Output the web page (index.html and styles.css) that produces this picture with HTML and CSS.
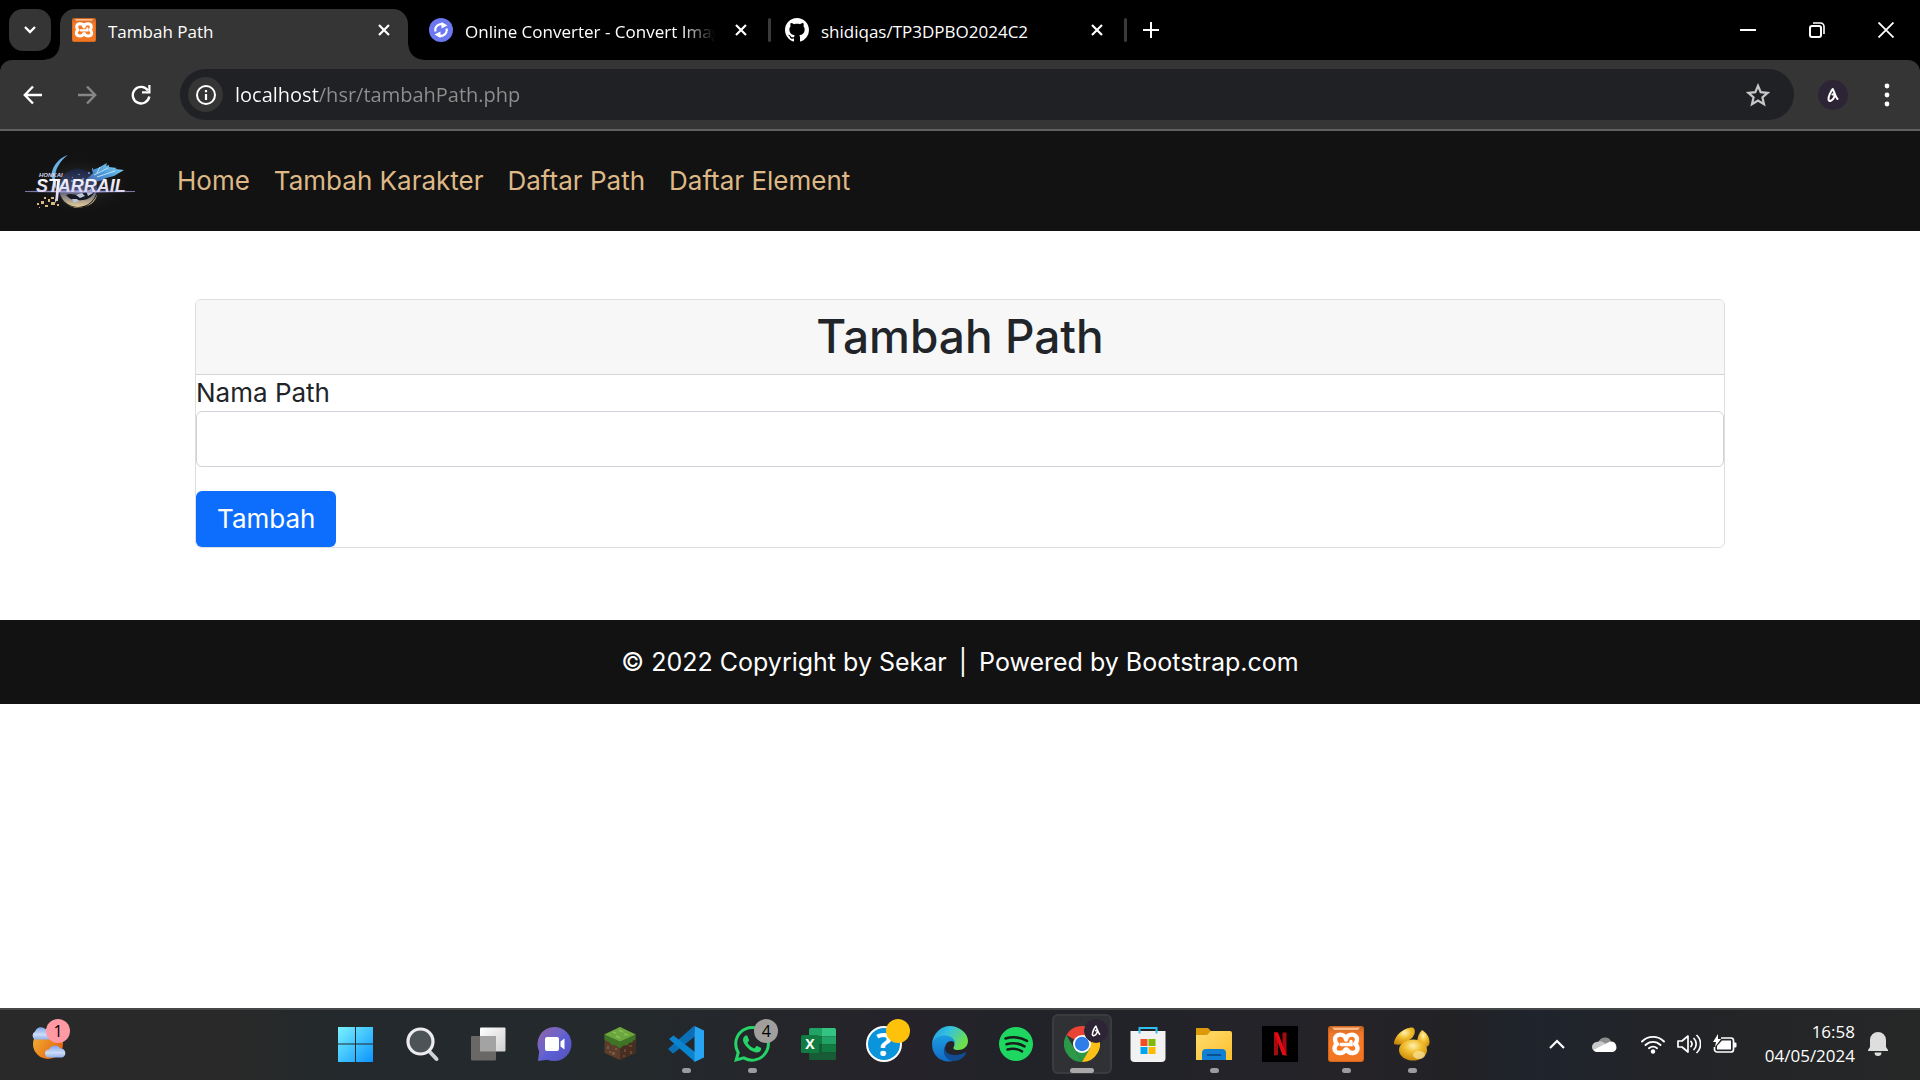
FILE: index.html
```html
<!DOCTYPE html>
<html lang="id">
<head>
<meta charset="utf-8">
<meta name="viewport" content="width=device-width, initial-scale=1">
<title>Tambah Path</title>
<link rel="stylesheet" href="styles.css">
</head>
<body>
<svg class="defs" aria-hidden="true">
  <defs>
    <linearGradient id="orange" x1="0" y1="0" x2="0" y2="1"><stop offset="0" stop-color="#c8641f"/><stop offset=".2" stop-color="#f0792c"/><stop offset=".5" stop-color="#fb7a24"/><stop offset="1" stop-color="#ef7623"/></linearGradient>
    <symbol id="xampp" viewBox="0 0 36 36">
      <rect width="36" height="36" rx="3" fill="#d4651b"/>
      <rect x="1" y="1" width="34" height="34" rx="2" fill="url(#orange)"/>
      <path d="M4 1.500h28l-2 2.500H6z" fill="#fbb98a"/>
      <path d="M18 13.500C17 7 7 7 7 13.500c0 2.500 1 3.500 2 4.500-1.500 1-2.500 2.500-2.500 4.500C6.500 28.500 16 28 17.500 23.500h1.500c1.500 4.500 10.500 5 10.500-1 0-2-1-3.500-2.500-4.500 1-1 2-2 2-4.500C29 7 19 7 18 13.500z" fill="none" stroke="#fff" stroke-width="4.400" stroke-linejoin="round"/>
      <path d="M13 18.500h10v-3" fill="none" stroke="#fff" stroke-width="3.400" stroke-linecap="round"/>
    </symbol>
    <symbol id="close" viewBox="0 0 14 14"><path d="M2 2l10 10M12 2l-10 10" stroke="#fff" stroke-width="2.200"/></symbol>
    <symbol id="avatar" viewBox="0 0 30 30">
      <circle cx="15" cy="15" r="15" fill="#2d2535"/>
      <path d="M14.500 14.500c2-1 3 0 1.500 3-1.500 3.500-5 4.500-5.500 2-.3-3 2.500-8.500 4.300-10.500 1 1.500 2.500 7.500 4.700 10" fill="none" stroke="#fff" stroke-width="2" stroke-linecap="round" stroke-linejoin="round"/>
    </symbol>
  </defs>
</svg>

<header class="browser">
  <div class="tabstrip">
    <button class="tab-search" aria-label="Search tabs"><svg width="14" height="10" viewBox="0 0 14 10"><path d="M2 2l5 5 5-5" fill="none" stroke="#fff" stroke-width="2.400"/></svg></button>
    <div class="tab tab-active">
      <svg class="favicon"><use href="#xampp"/></svg>
      <button class="tab-title">Tambah Path</button>
      <button class="tab-close" aria-label="Close tab"><svg width="14" height="14"><use href="#close"/></svg></button>
    </div>
    <div class="tab tab-next">
      <svg class="favicon" viewBox="0 0 24 24"><circle cx="12" cy="12" r="12" fill="#6c77f2"/><path d="M6.500 13.500a5.800 5.800 0 0 1 8.500-6.500M17.500 10.500A5.800 5.800 0 0 1 9 17" fill="none" stroke="#fff" stroke-width="2.200"/><path d="M12.500 4l6 3.500-6 3zM11.500 20l-6-3.500 6-3z" fill="#fff"/></svg>
      <button class="tab-title tab-title-fade">Online Converter - Convert Images</button>
      <button class="tab-close" aria-label="Close tab"><svg width="14" height="14"><use href="#close"/></svg></button>
    </div>
    <div class="tab">
      <svg class="favicon" viewBox="0 0 16 16"><path fill="#fff" d="M8 0C3.580 0 0 3.580 0 8c0 3.540 2.290 6.530 5.470 7.590.4.070.55-.17.55-.38 0-.19-.01-.82-.01-1.490-2.010.37-2.530-.49-2.690-.94-.09-.23-.48-.94-.82-1.130-.28-.15-.68-.52-.01-.53.63-.01 1.080.58 1.230.82.72 1.210 1.870.87 2.330.66.07-.52.28-.87.51-1.070-1.780-.2-3.640-.89-3.640-3.950 0-.87.31-1.590.82-2.150-.08-.2-.36-1.020.08-2.120 0 0 .67-.21 2.200.82.64-.18 1.320-.27 2-.27s1.360.09 2 .27c1.530-1.040 2.200-.82 2.200-.82.44 1.100.16 1.920.08 2.120.51.56.82 1.270.82 2.150 0 3.070-1.870 3.750-3.650 3.950.29.25.54.73.54 1.480 0 1.070-.01 1.930-.01 2.200 0 .21.15.46.55.38A8.010 8.010 0 0 0 16 8c0-4.420-3.580-8-8-8z"/></svg>
      <button class="tab-title">shidiqas/TP3DPBO2024C2</button>
      <button class="tab-close" aria-label="Close tab"><svg width="14" height="14"><use href="#close"/></svg></button>
    </div>
    <button class="new-tab" aria-label="New tab"><svg width="16" height="16" viewBox="0 0 16 16"><path d="M8 0v16M0 8h16" stroke="#fff" stroke-width="2"/></svg></button>
    <div class="window-controls">
      <button aria-label="Minimize"><svg width="16" height="16" viewBox="0 0 16 16"><path d="M0 8h16" stroke="#fff" stroke-width="2"/></svg></button>
      <button aria-label="Restore"><svg width="16" height="16" viewBox="0 0 16 16"><rect x="1" y="4" width="11" height="11" rx="2" fill="none" stroke="#fff" stroke-width="2"/><path d="M4 1h7.500A3.500 3.500 0 0 1 15 4.500V12" fill="none" stroke="#fff" stroke-width="1.600"/></svg></button>
      <button aria-label="Close window"><svg width="16" height="16" viewBox="0 0 16 16"><path d="M.5.5l15 15M15.500.5l-15 15" stroke="#fff" stroke-width="1.800"/></svg></button>
    </div>
  </div>
  <div class="toolbar">
    <button class="tool" aria-label="Back"><svg width="20" height="20" viewBox="0 0 20 20"><path d="M19 10H2M10 1.500L1.800 10l8.200 8.500" fill="none" stroke="#fff" stroke-width="2.400"/></svg></button>
    <button class="tool" aria-label="Forward"><svg width="20" height="20" viewBox="0 0 20 20"><path d="M1 10h17M10 1.500l8.200 8.500-8.200 8.500" fill="none" stroke="#868686" stroke-width="2.400"/></svg></button>
    <button class="tool" aria-label="Reload"><svg width="20" height="20" viewBox="0 0 20 20"><path d="M17 5.500A8.300 8.300 0 1 0 18.300 11.500" fill="none" stroke="#fff" stroke-width="2.400"/><path d="M19.500 0v8.500H11V6.300h6.300V0z" fill="#fff"/></svg></button>
    <div class="omnibox">
      <button class="site-info" aria-label="Site information"><svg width="20" height="20" viewBox="0 0 20 20"><circle cx="10" cy="10" r="9" fill="none" stroke="#fff" stroke-width="2"/><path d="M10 9v6M10 5v2.200" stroke="#fff" stroke-width="2.200"/></svg></button>
      <input class="url" type="text" aria-label="Address" value="localhost/hsr/tambahPath.php">
      <button class="bookmark" aria-label="Bookmark this tab"><svg width="24" height="24" viewBox="0 0 24 24"><path d="M12 2.800l2.700 6.400 6.900.6-5.200 4.500 1.600 6.800-6-3.600-6 3.600 1.600-6.800-5.200-4.500 6.900-.6z" fill="none" stroke="#c7c7c7" stroke-width="2.200"/></svg></button>
    </div>
    <button class="profile" aria-label="Profile"><svg width="30" height="30"><use href="#avatar"/></svg></button>
    <button class="menu" aria-label="Menu"><svg width="6" height="26" viewBox="0 0 6 26"><g fill="#fff"><circle cx="3" cy="4" r="2.400"/><circle cx="3" cy="13" r="2.400"/><circle cx="3" cy="22" r="2.400"/></g></svg></button>
  </div>
</header>

<nav class="navbar">
  <a class="brand" href="#" aria-label="Honkai Star Rail">
    <svg width="140" height="80" viewBox="0 0 140 80">
      <defs>
        <radialGradient id="glow"><stop offset="0" stop-color="#5a5a66" stop-opacity=".6"/><stop offset="1" stop-color="#121212" stop-opacity="0"/></radialGradient>
        <linearGradient id="planet" x1="0" y1="0" x2="0" y2="1"><stop offset="0" stop-color="#1a2340"/><stop offset=".55" stop-color="#4a5075"/><stop offset="1" stop-color="#e8cf98"/></linearGradient>
        <linearGradient id="ribbon" x1="0" y1="1" x2="1" y2="0"><stop offset="0" stop-color="#4b63a8"/><stop offset=".5" stop-color="#4d9fdd"/><stop offset="1" stop-color="#9be2f5"/></linearGradient>
        <linearGradient id="letters" x1="0" y1="0" x2="0" y2="1"><stop offset="0" stop-color="#fff"/><stop offset="1" stop-color="#cfcbf2"/></linearGradient>
      </defs>
      <ellipse cx="70" cy="44" rx="52" ry="30" fill="url(#glow)"/>
      <circle cx="68" cy="47" r="19" fill="url(#planet)"/>
      <path d="M56 54c6-3 10 2 16-1 6-3 6-7 13-5-1 7-7 11-12 11-7 1-13 0-17-5z" fill="#181a24"/>
      <path d="M66 54l6-2 3 3-5 2zM76 50l5-2 2 4-5 3zM62 58l5 0 2 2-5 2z" fill="#b9c4dc"/>
      <path d="M50 54a19.500 19.500 0 0 0 37-1c-1 8-8 13.500-18 13.500-9 0-16-4-19-12.500z" fill="#f3dcab"/>
      <path d="M58 14C48 17 40 28 42 37l5 14-2-14c0-9 5-17 13-23z" fill="#6ab0e4"/>
      <path d="M76 39l7-7-1-3 6-2 9-5-1 3 3-1 0 2 8 1-2 1 9 1-10 6-8 2-6 3-9 1z" fill="url(#ribbon)"/>
      <path d="M84 34l14-7M87 36l18-6M90 26l-3 6" stroke="#d8f3fb" stroke-width=".8"/>
      <path d="M62 36h1v1h-1zM68 33h2v1h-2zM72 37h2v2h-2zM78 31h2v2h-2zM61 39h2v2h-2zM82 27h1v2h-1z" fill="#5c86c2"/>
      <path d="M27 62h2v2h-2zM31 60h3v3h-3zM35 64h3v2h-3zM38 58h2v3h-2zM41 61h4v3h-4zM45 58h3v2h-3zM34 56h2v2h-2zM29 66h1v1h-1zM47 63h2v2h-2zM41 56h3v2h-3z" fill="#d8ba7c"/>
      <path d="M15 50.500l55-1 55 1-55 1z" fill="#a5a2da" stroke="#8f8cc4" stroke-width=".6"/>
      <path d="M47 40h3l-2 18-3 4z" fill="url(#letters)"/>
      <text x="26" y="51" class="brand-word" fill="url(#letters)">STARRAIL</text>
      <text x="29" y="36" class="brand-small" fill="#d6d4ef">HONKAI</text>
    </svg>
  </a>
  <a class="nav-link" href="#">Home</a>
  <a class="nav-link" href="#">Tambah Karakter</a>
  <a class="nav-link" href="#">Daftar Path</a>
  <a class="nav-link" href="#">Daftar Element</a>
</nav>

<main class="content">
  <section class="card">
    <h1 class="card-header">Tambah Path</h1>
    <form class="form">
      <label class="form-label" for="nama">Nama Path</label>
      <input class="form-control" id="nama" type="text">
      <button class="btn" type="submit">Tambah</button>
    </form>
  </section>
</main>

<footer class="footer">
  <span>© 2022 Copyright by Sekar</span><span>|</span><span>Powered by Bootstrap.com</span>
</footer>

<div class="taskbar">
  <div class="task-left">
    <button class="app" aria-label="Weather">
      <svg width="44" height="44" viewBox="0 0 44 44">
        <defs>
          <linearGradient id="sun" x1="0" y1="0" x2="1" y2=".6"><stop offset="0" stop-color="#f0b83a"/><stop offset="1" stop-color="#e8640e"/></linearGradient>
          <linearGradient id="cloud" x1="0" y1="0" x2="0" y2="1"><stop offset="0" stop-color="#7fa3e8"/><stop offset=".6" stop-color="#cddcf7"/><stop offset="1" stop-color="#8fb0ec"/></linearGradient>
        </defs>
        <circle cx="26" cy="22" r="15" fill="url(#sun)"/>
        <path d="M13 17.500a4.500 4.500 0 0 1 0-8 6.500 6.500 0 0 1 11-2 5 5 0 0 1 5 5v5z" fill="url(#cloud)"/>
        <path d="M27 35.500a4 4 0 0 1 0-8 6.500 6.500 0 0 1 11.500-1 4.600 4.600 0 0 1 1.500 9z" fill="url(#cloud)"/>
      </svg>
      <span class="badge badge-news">1</span>
    </button>
  </div>
  <div class="apps">
    <button class="app" aria-label="Start"><svg width="36" height="36" viewBox="0 0 36 36"><defs><linearGradient id="win" x1="0" y1="0" x2="36" y2="36" gradientUnits="userSpaceOnUse"><stop offset="0" stop-color="#7df3ff"/><stop offset=".5" stop-color="#41c4ff"/><stop offset="1" stop-color="#0a92fb"/></linearGradient></defs><path d="M0 1h17v16.500H0zM18 1h17v16.500H18zM0 18.500h17V36H0zM18 18.500h17V36H18z" fill="url(#win)"/></svg></button>
    <button class="app" aria-label="Search"><svg width="36" height="36" viewBox="0 0 36 36"><path d="M24 24l8.500 9" stroke="#cfd3d9" stroke-width="4" stroke-linecap="round"/><circle cx="16.500" cy="15.500" r="12.500" fill="#4d5457" stroke="#ececee" stroke-width="3.200"/></svg></button>
    <button class="app" aria-label="Task view"><svg width="36" height="36" viewBox="0 0 36 36"><defs><linearGradient id="pane" x1="0" y1="0" x2="1" y2="1"><stop offset="0" stop-color="#fff"/><stop offset="1" stop-color="#cfcfcf"/></linearGradient></defs><rect x="10" y="1.500" width="25.500" height="24" rx="1" fill="url(#pane)"/><rect x="1" y="10" width="25" height="24.500" rx="1" fill="#6a6767"/><path d="M10 10h16v15.500H10z" fill="#a3a3a3"/></svg></button>
    <button class="app" aria-label="Chat"><svg width="36" height="36" viewBox="0 0 36 36"><defs><linearGradient id="chat" x1="0" y1="0" x2="1" y2="1"><stop offset="0" stop-color="#8f63a8"/><stop offset=".45" stop-color="#6d63c9"/><stop offset=".55" stop-color="#5b5fd6"/><stop offset="1" stop-color="#5750b8"/></linearGradient></defs><path d="M18.500 1a17 17 0 0 1 0 34q-4 0-7-1.300L2 35l1.200-9.500A17 17 0 0 1 18.500 1z" fill="url(#chat)"/><rect x="9" y="11" width="14" height="14" rx="2" fill="#fff"/><path d="M24.500 15.500l4-3v11l-4-3z" fill="#fff"/></svg></button>
    <button class="app" aria-label="Minecraft"><svg width="36" height="36" viewBox="0 0 36 36"><path d="M18 1l15.500 7v19L18 34 2.500 27V8z" fill="#5b3d2b"/><path d="M18 15.500l15.500-7V27L18 34z" fill="#472e20"/><path d="M18 1l15.500 7.500v5l-3 1.500v1.500l-4 .5v2l-5 .5-3.500 3-4-3-4-.5-3-3-2-.5-2.500-2v-5z" fill="#3f7326"/><path d="M18 1l15.500 7.500L18 15.500 2.500 8.500z" fill="#6ba63e"/><path d="M11 6l3 1M17 4l4 2M22 8l4 1M14 10l4 2" stroke="#88c054" stroke-width="1.500"/><path d="M5 20h2v3H5zM10 26h3v3h-3zM13 22h2v2h-2zM7 25h2v2H7z" fill="#7a5743"/><path d="M22 23h2v3h-2zM27 19h3v2h-3zM28 25h2v3h-2zM21 29h2v2h-2z" fill="#6b4732"/></svg></button>
    <button class="app app-open" aria-label="Visual Studio Code"><svg width="36" height="36" viewBox="0 0 36 36"><path d="M26 0v11L5 27.500 0 23z" fill="#0a73bb"/><path d="M26 0L1 22.500l4.500 4.500L27 10z" fill="#0a6fb5"/><path d="M1 13l4.500-3.500L27 26v10z" fill="#0b84d0"/><path d="M26.500 0L36 4.500v27L26.500 36z" fill="#27a4f2"/></svg></button>
    <button class="app app-open" aria-label="WhatsApp"><svg width="36" height="36" viewBox="0 0 24 24"><path fill="#25d366" d="M17.472 14.382c-.297-.149-1.758-.867-2.030-.967-.273-.099-.471-.148-.67.15-.197.297-.767.966-.94 1.164-.173.199-.347.223-.644.075-.297-.15-1.255-.463-2.390-1.475-.883-.788-1.480-1.761-1.653-2.059-.173-.297-.018-.458.13-.606.134-.133.298-.347.446-.52.149-.174.198-.298.298-.497.099-.198.05-.371-.025-.52-.075-.149-.669-1.612-.916-2.207-.242-.579-.487-.5-.669-.51-.173-.008-.371-.01-.57-.01-.198 0-.52.074-.792.372-.272.297-1.040 1.016-1.040 2.479 0 1.462 1.065 2.875 1.213 3.074.149.198 2.096 3.200 5.077 4.487.709.306 1.262.489 1.694.625.712.227 1.360.195 1.871.118.571-.085 1.758-.719 2.006-1.413.248-.694.248-1.289.173-1.413-.074-.124-.272-.198-.57-.347m-5.421 7.403h-.004a9.870 9.870 0 01-5.031-1.378l-.361-.214-3.741.982.998-3.648-.235-.374a9.860 9.860 0 01-1.510-5.260c.001-5.450 4.436-9.884 9.888-9.884 2.640 0 5.122 1.030 6.988 2.898a9.825 9.825 0 012.893 6.994c-.003 5.450-4.437 9.884-9.885 9.884m8.413-18.297A11.815 11.815 0 0012.050 0C5.495 0 .16 5.335.157 11.892c0 2.096.547 4.142 1.588 5.945L.057 24l6.305-1.654a11.882 11.882 0 005.683 1.448h.005c6.554 0 11.890-5.335 11.893-11.893a11.821 11.821 0 00-3.480-8.413z"/></svg><span class="badge badge-chat">4</span></button>
    <button class="app" aria-label="Excel"><svg width="36" height="36" viewBox="0 0 36 36"><path d="M9 3.500A1.500 1.500 0 0 1 10.500 2H22v8.500H9z" fill="#21a366"/><path d="M22 2h12.500A1.500 1.500 0 0 1 36 3.500v7H22z" fill="#33c481"/><path d="M9 10.500h13v8H9z" fill="#107c41"/><path d="M22 10.500h14v8H22z" fill="#21a366"/><path d="M22 18.500h14v8H22z" fill="#107c41"/><path d="M9 18.500h13v8h14v6a1.500 1.500 0 0 1-1.500 1.500h-24A1.500 1.500 0 0 1 9 32.500z" fill="#185c37"/><rect x="1" y="9" width="18" height="18" rx="1.500" fill="#107c41"/><text x="10" y="23" class="excel-x" text-anchor="middle">X</text></svg></button>
    <button class="app" aria-label="Help"><svg class="help" width="36" height="36" viewBox="0 0 36 36"><circle cx="18" cy="18" r="17" fill="#0a94dc" stroke="#fff" stroke-width="2"/><text x="18" y="30" class="help-q" text-anchor="middle">?</text></svg><span class="badge badge-alert"></span></button>
    <button class="app" aria-label="Edge"><svg width="36" height="36" viewBox="0 0 36 36"><defs><linearGradient id="edgeTop" x1="0" y1="0" x2="1" y2=".5"><stop offset="0" stop-color="#1f97dc"/><stop offset=".45" stop-color="#35c1e0"/><stop offset="1" stop-color="#6ee04b"/></linearGradient><linearGradient id="edgeBody" x1="0" y1="0" x2="0" y2="1"><stop offset="0" stop-color="#1b9de2"/><stop offset="1" stop-color="#1169c4"/></linearGradient></defs><path d="M0 18C1 7 9 0 18 0s18 7 18 15c0 6-5 9-10 9-4 0-5-1.500-4.500-2.500C24 18 22 11 14 11 7 11 1 15 0 18z" fill="url(#edgeTop)"/><path d="M0 18c1-5 6-8.500 12.500-8.500 5 0 10.500 2.500 10.500 8-2-4-8-3-9.500 2C11 26 17 35 25 33.500 14 39 0 33 0 18z" fill="url(#edgeBody)"/><path d="M13.500 19.500c-2 5 2 9.500 9 9.500 4.500 0 8.500-1.500 10.500-2.500 1-.4 1.500.2 1 1C32 31.500 28 34.500 23 35c-9 .5-14-9-9.500-15.500z" fill="#124c92"/></svg></button>
    <button class="app" aria-label="Spotify"><svg width="36" height="36" viewBox="0 0 36 36"><circle cx="18" cy="18" r="17" fill="#1ed760"/><path d="M7.500 12.500c7-2 15-1.200 21.500 2.300M8.500 18.200c6-1.700 13-.8 18 2.200M9.500 23.500c5-1.400 10.500-.6 14.500 1.800" fill="none" stroke="#16201b" stroke-width="2.600" stroke-linecap="round"/></svg></button>
    <button class="app app-active" aria-label="Chrome"><svg width="36" height="36" viewBox="0 0 36 36"><path d="M18 18L2.400 9A18 18 0 0 1 33.600 9z" fill="#ea4335"/><path d="M2.400 9L10.200 22.500 18 36A18 18 0 0 1 2.400 9z" fill="#2b9a48"/><path d="M18 18l-7.800 4.500L18 36l7-12z" fill="#2b9a48"/><path d="M33.600 9A18 18 0 0 1 18 36l7.800-13.500L18 9z" fill="#fbc116"/><circle cx="18" cy="18" r="9" fill="#fff"/><circle cx="18" cy="18" r="7.200" fill="#2f7de9"/></svg><svg class="badge"><use href="#avatar"/></svg></button>
    <button class="app" aria-label="Microsoft Store"><svg width="36" height="36" viewBox="0 0 36 36"><path d="M.5 5h35v27a4 4 0 0 1-4 4h-27a4 4 0 0 1-4-4z" fill="#f2f2f2"/><path d="M9.500 7.500V2h17v5.500" fill="none" stroke="#2fc0ee" stroke-width="2"/><path d="M10.500 13h7v7h-7z" fill="#f25022"/><path d="M18.500 13h7v7h-7z" fill="#7fba00"/><path d="M10.500 21h7v7h-7z" fill="#00a4ef"/><path d="M18.500 21h7v7h-7z" fill="#ffb900"/></svg></button>
    <button class="app app-open" aria-label="File Explorer"><svg width="36" height="36" viewBox="0 0 36 36"><defs><linearGradient id="folder" x1="0" y1="0" x2="1" y2="1"><stop offset="0" stop-color="#ffdc70"/><stop offset="1" stop-color="#fbc02c"/></linearGradient></defs><path d="M0 2h12l4 4-3 4H0z" fill="#dc9a08"/><path d="M0 9h11l4-4h19a2 2 0 0 1 2 2v27H0z" fill="url(#folder)"/><path d="M6 34v-7a4 4 0 0 1 4-4h16a4 4 0 0 1 4 4v7z" fill="#117fd4"/><path d="M11 29h14" stroke="#0b4f93" stroke-width="2"/></svg></button>
    <button class="app" aria-label="Netflix"><svg width="36" height="36" viewBox="0 0 36 36"><rect width="36" height="36" fill="#000"/><path d="M12 6.500h4V29l-4 .5zM20.500 6.500h4v23l-4-.5z" fill="#a50a12"/><path d="M12 6.500h4l8.500 23-4-.5z" fill="#e50914"/></svg></button>
    <button class="app app-open" aria-label="XAMPP"><svg width="36" height="36"><use href="#xampp"/></svg></button>
    <button class="app app-open" aria-label="Navicat"><svg width="36" height="36" viewBox="0 0 36 36"><defs><radialGradient id="gold" cx=".5" cy=".3" r=".8"><stop offset="0" stop-color="#fff0b0"/><stop offset=".4" stop-color="#f0bd2c"/><stop offset="1" stop-color="#c07c04"/></radialGradient></defs><path d="M0 18C0 10 10 1 19 1.500c4 3 1 10-3 12-5 3-11 7-16 4.500z" fill="url(#gold)"/><path d="M28 4c5 3 9 9 7 15l-5 4-7-6c0-5 2-10 5-13z" fill="url(#gold)"/><ellipse cx="19" cy="24" rx="14" ry="10.500" fill="url(#gold)"/><ellipse cx="25" cy="29" rx="6" ry="4" fill="#fbe7a0" opacity=".7"/></svg></button>
  </div>
  <div class="tray">
    <button class="tray-btn" aria-label="Show hidden icons"><svg width="18" height="12" viewBox="0 0 18 12"><path d="M2 10l7-7 7 7" fill="none" stroke="#fff" stroke-width="2.200"/></svg></button>
    <button class="tray-btn tray-cloud" aria-label="OneDrive"><svg width="26" height="18" viewBox="0 0 26 18"><path d="M6 9a7 7 0 0 1 13-3l-6 6z" fill="#8d8d8d"/><path d="M5 17a5 5 0 0 1 0-10 7 7 0 0 1 6 0l10 8z" fill="#c9c9c9"/><path d="M11 10l7-3.500a5.500 5.500 0 0 1 3 10.500H5q-2 0-3.500-2z" fill="#fff"/></svg></button>
    <button class="tray-btn tray-status" aria-label="Network, volume and battery">
      <svg width="24" height="20" viewBox="0 0 24 20"><g fill="none" stroke="#fff" stroke-width="1.900" stroke-linecap="round"><path d="M1 7.500a15.500 15.500 0 0 1 22 0M4.500 11a10.600 10.600 0 0 1 15 0M8 14.200a5.800 5.800 0 0 1 8 0"/></g><circle cx="12" cy="17.500" r="2.200" fill="#fff"/></svg>
      <svg width="24" height="20" viewBox="0 0 24 20"><g fill="none" stroke="#fff" stroke-width="1.700" stroke-linecap="round" stroke-linejoin="round"><path d="M1 7v6h4l6 5V2L5 7zM14 7.500a4 4 0 0 1 0 5M17 4.500a8 8 0 0 1 0 11M20 1.500a12 12 0 0 1 0 17"/></g></svg>
      <svg width="24" height="20" viewBox="0 0 24 20"><path d="M8 4h10a2.500 2.500 0 0 1 2.500 2.500v9A2.500 2.500 0 0 1 18 18H4a2.500 2.500 0 0 1-2.500-2.500V13" fill="none" stroke="#fff" stroke-width="1.700"/><path d="M9 6.500h9v9H4V12z" fill="#fff"/><path d="M21 8.500h1.500a1 1 0 0 1 1 1v3a1 1 0 0 1-1 1H21zM5 0L0 8h3l-1 5 6-8H5z" fill="#fff"/></svg>
    </button>
    <button class="clock"><time>16:58</time><time>04/05/2024</time></button>
    <button class="tray-btn tray-bell" aria-label="Notifications"><svg width="20" height="24" viewBox="0 0 20 24"><path d="M10 0a8 8 0 0 1 8 8v7l2 3v1H0v-1l2-3V8a8 8 0 0 1 8-8zM6.500 20.500h7a3.500 3.500 0 0 1-7 0z" fill="#dedede"/></svg></button>
  </div>
</div>
</body>
</html>
```
FILE: styles.css
```css
* { box-sizing: border-box; }

body {
  margin: 0;
  min-height: 100vh;
  display: flex;
  flex-direction: column;
  background: #fff;
  color: #212529;
  font: 26px/36px Inter, sans-serif;
}

button {
  margin: 0;
  padding: 0;
  border: 0;
  background: none;
  color: inherit;
  font: inherit;
  display: flex;
  align-items: center;
  justify-content: center;
}

svg { display: block; flex: none; }
.defs { position: absolute; width: 0; height: 0; }

/* Browser window */
.browser {
  background: #000;
  color: #fff;
  font: 17px/24px "Open Sans", sans-serif;
}

.tabstrip {
  display: flex;
  align-items: center;
  height: 60px;
  padding-left: 9px;
}

.tab-search {
  width: 42px;
  height: 42px;
  border-radius: 14px;
  background: #353535;
}

.tab {
  position: relative;
  flex: 0 1 356px;
  min-width: 0;
  display: flex;
  align-items: center;
  gap: 12px;
  padding: 0 18px 0 14px;
  border-right: 3px solid transparent;
}

.tab-active {
  flex-basis: 348px;
  align-self: flex-end;
  height: 51px;
  margin-left: 9px;
  padding: 0 15px 9px 12px;
  border: 0;
  border-radius: 15px 15px 0 0;
  background: #353535;
}

.tab-next { margin-left: 7px; }

.tab-active::before,
.tab-active::after {
  content: "";
  position: absolute;
  bottom: 0;
  width: 15px;
  height: 15px;
}

.tab-active::before {
  right: 100%;
  background: radial-gradient(circle at 0 0, transparent 14px, #353535 15px);
}

.tab-active::after {
  left: 100%;
  background: radial-gradient(circle at 100% 0, transparent 14px, #353535 15px);
}

.tab:not(.tab-active)::after {
  content: "";
  position: absolute;
  right: -3px;
  width: 3px;
  height: 24px;
  border-radius: 2px;
  background: #3a3a3a;
}

.favicon { width: 24px; height: 24px; }

.tab-title {
  flex: 1;
  min-width: 0;
  padding-top: 3px;
  overflow: hidden;
  justify-content: flex-start;
  white-space: nowrap;
}

.tab-title-fade { mask-image: linear-gradient(to right, #000 85%, transparent 98%); }
.tab-close { width: 18px; height: 24px; }
.new-tab { width: 32px; height: 32px; margin-left: 8px; }
.window-controls { display: flex; margin-left: auto; }
.window-controls button { width: 69px; height: 60px; }

.toolbar {
  display: flex;
  align-items: center;
  height: 71px;
  padding: 0 15px 2px 6px;
  border-radius: 12px 12px 0 0;
  background: #353535;
  box-shadow: inset 0 -2px #606060;
}

.tool { width: 54px; height: 51px; }

.omnibox {
  flex: 1;
  display: flex;
  align-items: center;
  height: 51px;
  margin-left: 12px;
  padding: 0 24px 0 8px;
  border-radius: 26px;
  background: #202124;
}

.site-info {
  width: 35px;
  height: 35px;
  border-radius: 50%;
  background: #353535;
}

.url {
  flex: 1;
  min-width: 0;
  margin-left: 12px;
  padding: 0;
  border: 0;
  outline: 0;
  background: linear-gradient(to right, #fff 84px, #8f8f8f 84px);
  background-clip: text;
  color: transparent;
  font: 20px/28px "Open Sans", sans-serif;
}

.profile { margin-left: 24px; }
.menu { width: 36px; height: 51px; margin-left: 21px; }

/* Site navigation */
.navbar {
  display: flex;
  align-items: center;
  gap: 24px;
  height: 100px;
  padding-left: 10px;
  background: #121212;
}

.brand { margin-right: 3px; }
.brand-word { font: italic 700 18px "Liberation Sans", sans-serif; }
.brand-small { font: italic 700 6px "Liberation Sans", sans-serif; }
.nav-link { color: #deb887; text-decoration: none; }

/* Form card */
.content { padding: 68px 10% 72px; }

.card {
  max-width: 1530px;
  margin: 0 auto;
  border: 1px solid #dedede;
  border-radius: 6px;
}

.card-header {
  margin: 0;
  padding: 9px 24px 11px;
  border-bottom: 1px solid #d5d5d5;
  border-radius: 5px 5px 0 0;
  background: #f7f7f7;
  font-size: 46px;
  font-weight: 500;
  line-height: 54px;
  text-align: center;
}

.form { display: flex; flex-direction: column; align-items: flex-start; }

.form-control {
  width: 100%;
  height: 56px;
  margin-bottom: 24px;
  padding: 9px 18px;
  border: 1px solid #ced4da;
  border-radius: 6px;
  background: #fff;
  font: inherit;
}

.btn {
  height: 56px;
  padding: 0 21px;
  border-radius: 6px;
  background: #0d6efd;
  color: #fff;
}

.footer {
  display: flex;
  justify-content: center;
  gap: 12px;
  margin-bottom: auto;
  padding: 24px;
  background: #121212;
  color: #fff;
  font-size: 25px;
}

/* Taskbar */
.taskbar {
  display: grid;
  grid-template-columns: minmax(0, 324fr) auto minmax(0, 474fr);
  align-items: center;
  height: 72px;
  background: linear-gradient(to right, #2a2929 0%, #292929 12%, #23292c 18%, #24292c 33%, #252329 47%, #222329 52%, #222329 60%, #252328 70%, #222225 76%, #1f242d 80%, #232427 87%, #262727 100%);
  box-shadow: inset 0 2px #464748;
}

.task-left { padding-left: 14px; }
.apps { display: flex; gap: 6px; }

.app {
  position: relative;
  width: 60px;
  height: 60px;
  border-radius: 6px;
}

.app-active { background: #2f3135; box-shadow: inset 0 0 0 2px #393b3e; }

.app-open::after,
.app-active::after {
  content: "";
  position: absolute;
  bottom: 1px;
  width: 9px;
  height: 5px;
  border-radius: 3px;
  background: #9c9c9e;
}

.app-active::after { width: 24px; background: #aaa8a8; }

.badge {
  position: absolute;
  top: 5px;
  left: 32px;
  width: 24px;
  height: 24px;
  border-radius: 50%;
  color: #000;
  font: 16px/24px "Open Sans", sans-serif;
  text-align: center;
}

.badge-news { background: #ff99a4; }
.badge-chat { background: #a19f9d; }
.badge-alert { background: #ffc20a; }
.help { overflow: visible; }
.excel-x { fill: #fff; font: 700 14px "Open Sans", sans-serif; }
.help-q { fill: #fff; font: 700 33px "Open Sans", sans-serif; }

.tray {
  display: flex;
  align-items: center;
  justify-content: flex-end;
  padding-right: 32px;
  color: #fff;
  font: 17px/24px "Open Sans", sans-serif;
}

.tray-btn { height: 48px; }
.tray-cloud { margin-left: 26px; }
.tray-status { gap: 12px; margin-left: 23px; }

.clock {
  flex-direction: column;
  align-items: flex-end;
  margin-left: 28px;
}

.tray-bell { margin-left: 13px; }
```
